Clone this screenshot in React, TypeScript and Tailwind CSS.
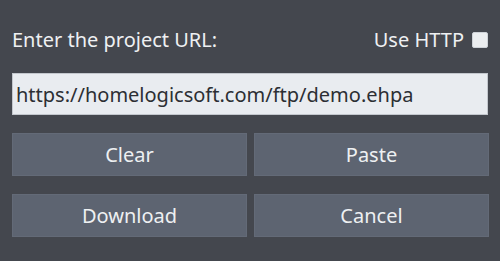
export default function App() {
  return (
    <div
      className="w-[500px] h-[261px] bg-[#44474e] px-3 pt-6 flex flex-col"
      style={{ fontFamily: '"Noto Sans", "Open Sans", sans-serif' }}
    >
      <div className="flex items-center justify-between h-[32px]">
        <span className="text-[20px] text-[#eef0f2]">Enter the project URL:</span>
        <label className="flex items-center gap-2 text-[20px] text-[#eef0f2]">
          Use HTTP
          <span className="w-[16px] h-[16px] bg-[#eceef0] rounded-[2px] border border-[#cfd3d8]"></span>
        </label>
      </div>
      <input
        readOnly
        value="https://homelogicsoft.com/ftp/demo.ehpa"
        className="mt-[17px] h-[42px] w-[476px] bg-[#e9ecf0] border border-[#c3c7cd] px-[3px] text-[20px] text-[#2c2f34] outline-none"
      />
      <div className="mt-[18px] grid grid-cols-2 gap-x-[7px] gap-y-[18px] w-[477px]">
        {["Clear", "Paste", "Download", "Cancel"].map((label) => (
          <button
            key={label}
            className="h-[43px] bg-[#5d6471] border border-[#636a77] text-[20px] text-[#eef0f2]"
          >
            {label}
          </button>
        ))}
      </div>
    </div>
  );
}
